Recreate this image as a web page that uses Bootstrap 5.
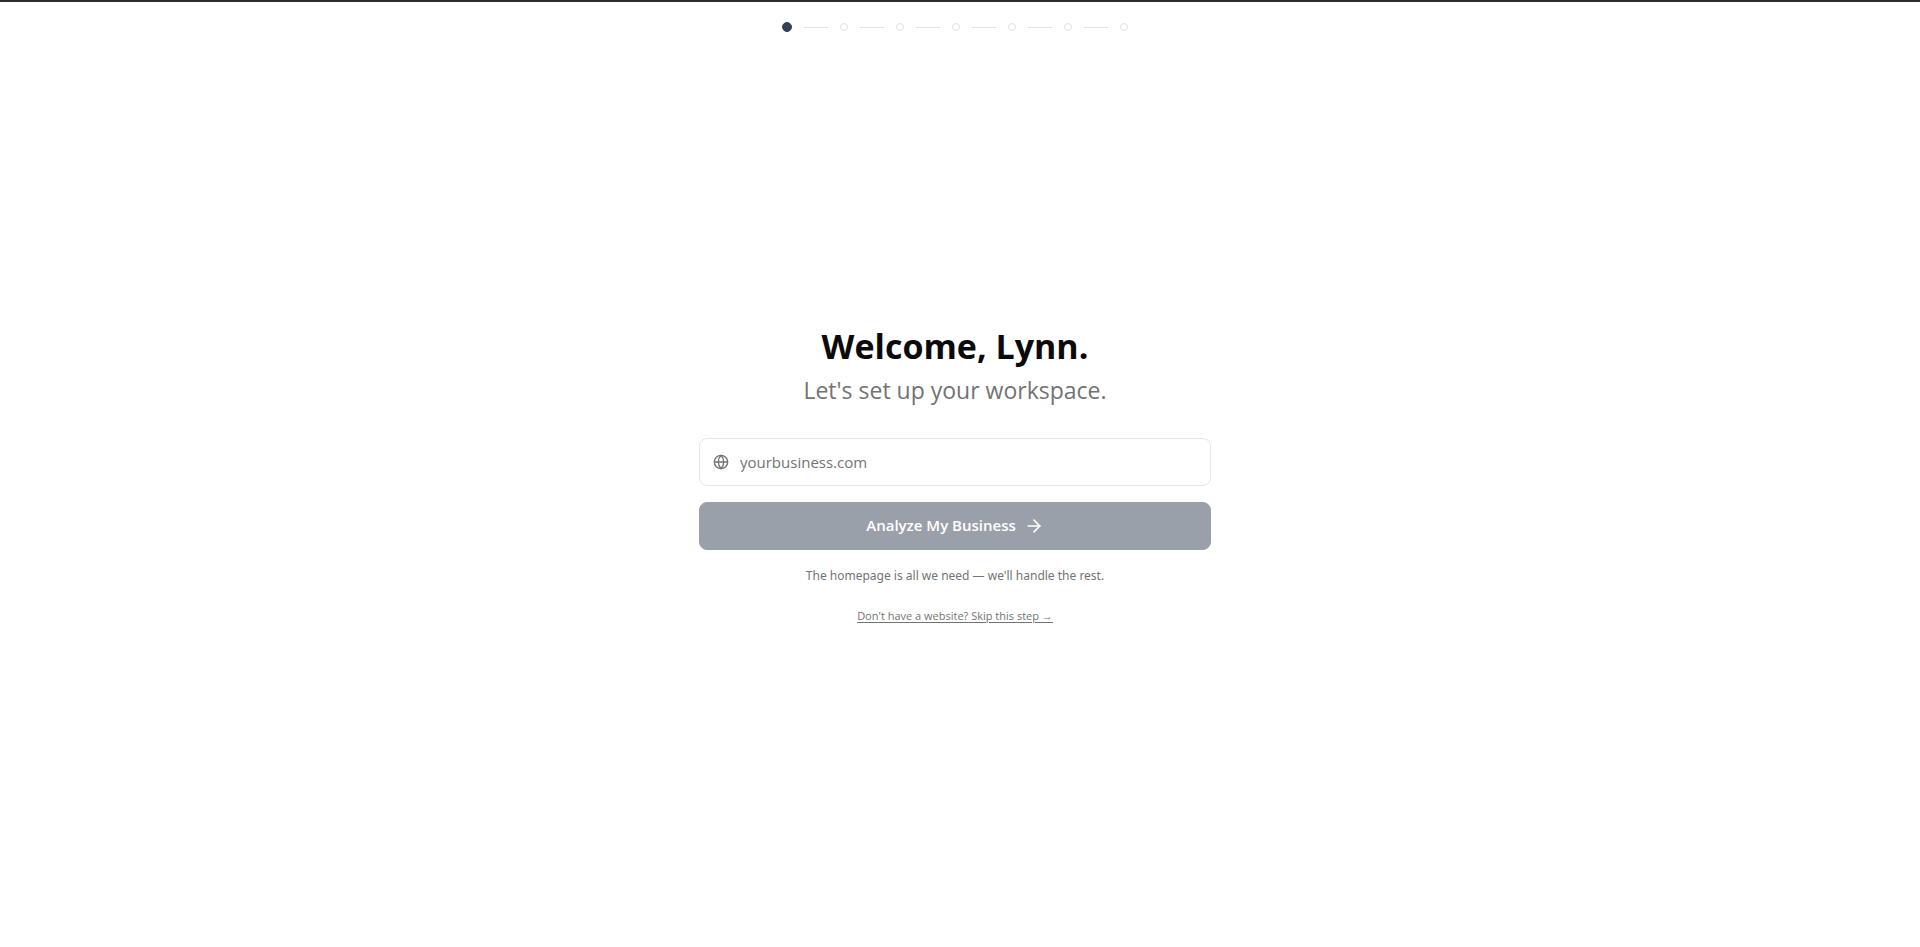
<!DOCTYPE html>
<html lang="en">
<head>
<meta charset="utf-8">
<meta name="viewport" content="width=device-width, initial-scale=1">
<title>Workspace setup</title>
<link href="https://cdn.jsdelivr.net/npm/bootstrap@5.3.0/dist/css/bootstrap.min.css" rel="stylesheet">
<style>
  body { font-family: "Segoe UI", "Open Sans", "Liberation Sans", sans-serif; color: #0a0a0a; border-top: 2px solid #2f2c2d; padding-right: 10px; }
  .stepper { gap: 12px; padding-top: 20px; height: 30px; }
  .step-dot { width: 8px; height: 8px; border: 1px solid #e2e2e2; border-radius: 50%; }
  .step-dot.current { width: 10px; height: 10px; background: #334155; border-color: #334155; }
  .step-line { width: 24px; height: 2px; border-bottom: 1px solid #e2e2e2; }
  .setup-panel { max-width: 512px; padding-bottom: 30px; }
  .setup-title { font-size: 34px; line-height: 40px; font-weight: 700; margin-bottom: 8px; }
  .setup-subtitle { font-size: 23px; line-height: 32px; margin-bottom: 32px; }
  .text-quiet, .text-quiet:hover { color: #737373; }
  .url-field { height: 48px; border: 1px solid #e5e5e5; border-radius: 8px; padding: 0 13px; gap: 11px; }
  .url-field .form-control { font-size: 15px; line-height: 24px; }
  .url-field .form-control:focus { box-shadow: none; }
  .url-field .form-control::placeholder { color: #737373; opacity: 1; }
  .btn-analyze { --bs-btn-disabled-bg: #99a0aa; --bs-btn-disabled-color: #fff; --bs-btn-disabled-border-color: #99a0aa; --bs-btn-disabled-opacity: 1; height: 48px; border-radius: 8px; font-size: 15px; font-weight: 600; }
  .hint { font-family: "Segoe UI", "Noto Sans", sans-serif; font-size: 12px; line-height: 20px; margin-bottom: 22px; }
  .skip-link { font-size: 11px; line-height: 16px; text-underline-offset: 2px; }
</style>
</head>
<body class="min-vh-100 d-flex flex-column bg-white">
<header class="stepper d-flex justify-content-center align-items-center" aria-label="Step 1 of 7">
  <span class="step-dot current"></span><span class="step-line"></span>
  <span class="step-dot"></span><span class="step-line"></span>
  <span class="step-dot"></span><span class="step-line"></span>
  <span class="step-dot"></span><span class="step-line"></span>
  <span class="step-dot"></span><span class="step-line"></span>
  <span class="step-dot"></span><span class="step-line"></span>
  <span class="step-dot"></span>
</header>
<main class="flex-grow-1 d-flex align-items-center justify-content-center">
  <form class="setup-panel w-100 text-center">
    <h1 class="setup-title">Welcome, Lynn.</h1>
    <p class="setup-subtitle text-quiet">Let's set up your workspace.</p>
    <div class="url-field d-flex align-items-center mb-3">
      <label for="website" class="d-flex text-quiet" aria-label="Website">
        <svg width="16" height="16" viewBox="0 0 24 24" fill="none" stroke="currentColor" stroke-width="2" stroke-linecap="round" stroke-linejoin="round" aria-hidden="true"><circle cx="12" cy="12" r="10"/><path d="M12 2a14.5 14.5 0 0 0 0 20 14.5 14.5 0 0 0 0-20"/><path d="M2 12h20"/></svg>
      </label>
      <input id="website" type="text" class="form-control border-0 p-0" placeholder="yourbusiness.com">
    </div>
    <button type="submit" class="btn btn-analyze w-100 d-flex align-items-center justify-content-center gap-2 mb-3" disabled>
      Analyze My Business
      <svg width="20" height="20" viewBox="0 0 24 24" fill="none" stroke="currentColor" stroke-width="2" stroke-linecap="round" stroke-linejoin="round" aria-hidden="true"><path d="M5 12h14"/><path d="m12 5 7 7-7 7"/></svg>
    </button>
    <p class="hint text-quiet">The homepage is all we need — we'll handle the rest.</p>
    <a href="#" class="skip-link text-quiet d-block">Don't have a website? Skip this step →</a>
  </form>
</main>
<script src="https://cdn.jsdelivr.net/npm/bootstrap@5.3.0/dist/js/bootstrap.bundle.min.js"></script>
</body>
</html>
